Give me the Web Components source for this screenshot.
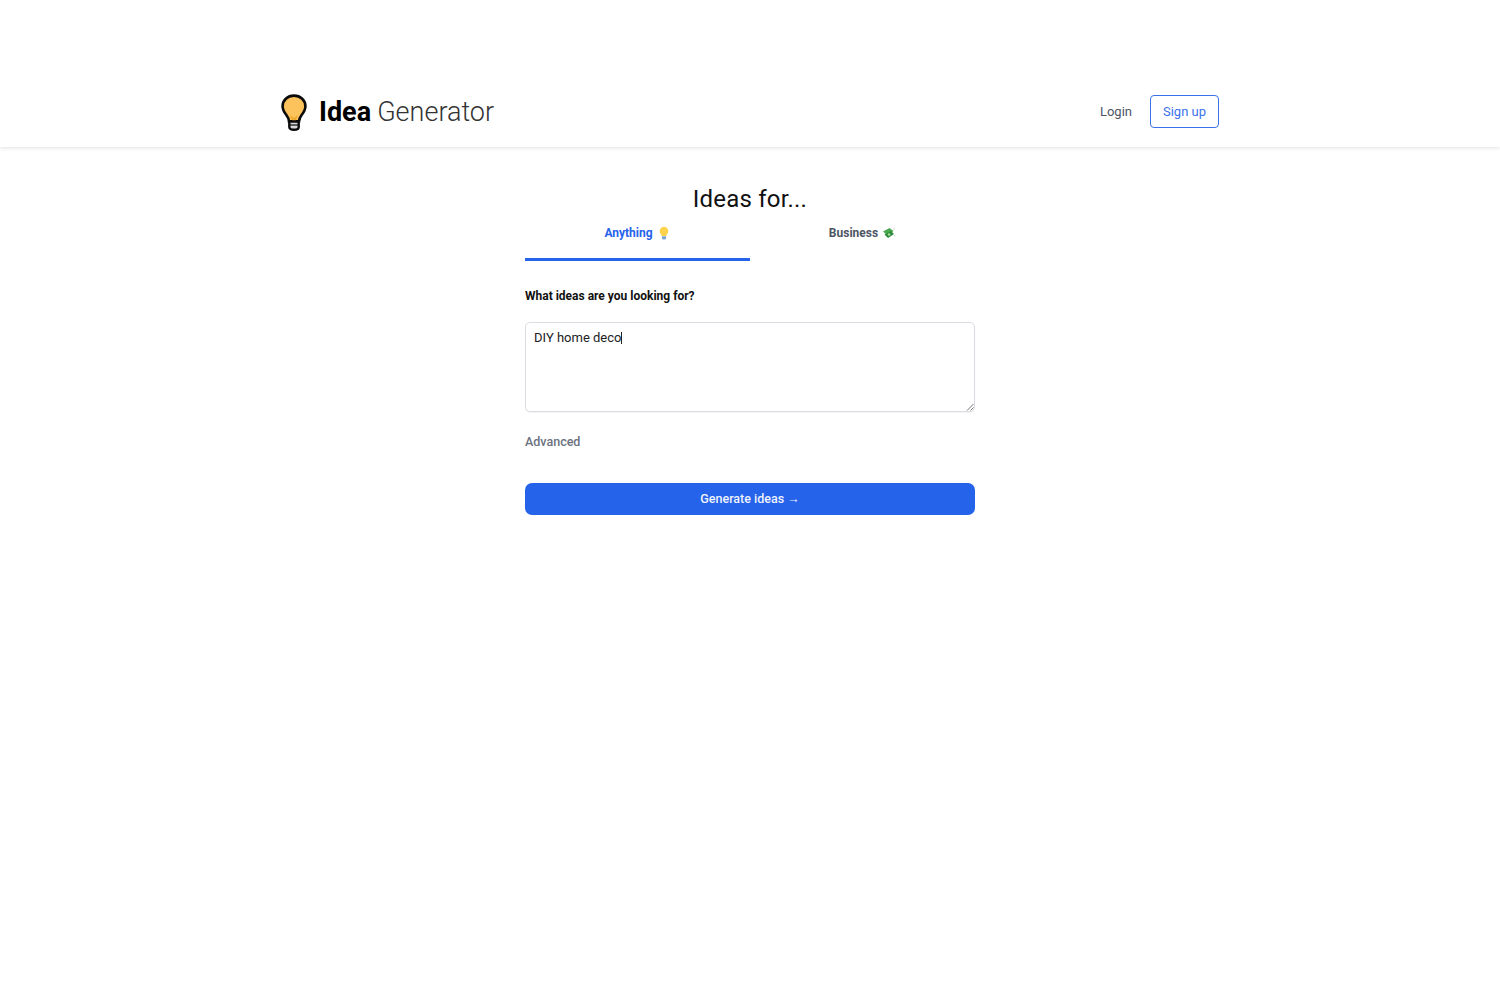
<!DOCTYPE html>
<html><head><meta charset="utf-8">
<style>
html,body{margin:0;padding:0;background:#fff;font-family:Roboto,"Liberation Sans",sans-serif;}
</style></head><body>
<template id="t-header"><style>
:host{display:block;box-sizing:border-box;height:146.5px;padding-top:94px;background:#fff;box-shadow:0 1px 4px rgba(0,0,0,.12);position:relative}
.in{width:938px;margin:0 auto;display:flex;justify-content:space-between;align-items:flex-start}
.logo{display:flex;align-items:center;height:36px;font-size:27px;color:#000;line-height:36px}
svg{display:block;width:26px;height:37px;margin-right:12px;flex:none}
b{font-weight:700}
.light{font-weight:300;color:#333;margin-left:6px}
nav{display:flex;align-items:center;gap:18px;font-size:13px;font-weight:400;padding-top:1px;padding-right:0}
.login{color:#4b5563}
.sign{box-sizing:border-box;height:33px;width:69px;display:flex;align-items:center;justify-content:center;border:1px solid #2563eb;opacity:.9;border-radius:4px;color:#2563eb}
</style><div class="in"><div class="logo">
<svg viewBox="0 0 26 37"><path d="M13 1.6C6.4 1.6 1.6 6.3 1.6 12.2c0 3.6 1.8 6.2 3.6 8.6 1.6 2.1 2.6 4 2.8 6.6h10c.2-2.6 1.2-4.500 2.800-6.600 1.800-2.400 3.600-5 3.600-8.600C24.400 6.300 19.600 1.600 13 1.600z" fill="#fcc35c" stroke="#0b0b0b" stroke-width="2.600"/><path d="M9 21l4 3 4-3-2.500 6.500h-3z" fill="#eda92f"/><path d="M8.300 27.500h9.400v5.600c0 1.600-1.600 2.700-4.700 2.700s-4.700-1.100-4.700-2.700z" fill="#d9d9d9" stroke="#0b0b0b" stroke-width="2.400"/><path d="M9 31h8" stroke="#0b0b0b" stroke-width="1.200"/></svg>
<b>Idea</b><span class="light">Generator</span></div>
<nav><span class="login">Login</span><span class="sign">Sign up</span></nav></div></template>

<template id="t-tabs"><style>
:host{display:flex;height:47px}
</style><slot></slot></template>

<template id="t-tab"><style>
:host{flex:1;box-sizing:border-box;display:flex;align-items:flex-start;justify-content:center;gap:4px;padding-top:11px;font-size:12px;font-weight:700;line-height:16px;color:#4b5563;height:47px;border-bottom:3px solid transparent;white-space:nowrap}
:host([active]){color:#2563eb;border-bottom-color:#2563eb}
::slotted(svg){display:block;width:14px;height:14px;margin-top:1px}
</style><slot name="label"></slot><slot name="icon"></slot></template>

<template id="t-form"><style>
:host{display:block;width:450px;margin:0 auto;padding-top:37px}
h1{margin:0;text-align:center;font-size:24px;font-weight:400;line-height:30px;color:#111;letter-spacing:.2px}
.lab{margin-top:27px;font-size:12px;font-weight:700;line-height:16px;color:#111}
.ta{box-sizing:border-box;position:relative;margin-top:18px;height:90px;border:1px solid #d9dce1;border-radius:5px;padding:7px 8px;font-size:13px;line-height:16px;color:#222;box-shadow:0 1px 1px rgba(0,0,0,.05)}
.caret{display:inline-block;width:1px;height:12px;background:#222;vertical-align:-2px}
.grip{position:absolute;right:0;bottom:0;width:8px;height:8px}
.adv{margin-top:22px;font-size:12.500px;font-weight:500;line-height:16px;color:#6b7280}
.btn{box-sizing:border-box;margin-top:33px;height:32px;background:#2563eb;border-radius:7px;color:#eef2fb;font-size:12.500px;font-weight:500;display:flex;align-items:center;justify-content:center}
</style>
<h1>Ideas for...</h1>
<slot name="tabs"></slot>
<div class="lab">What ideas are you looking for?</div>
<div class="ta">DIY home deco<span class="caret"></span><svg class="grip" viewBox="0 0 8 8"><path d="M1 7.500L7.500 1M4.500 7.500L7.500 4.500" stroke="#777" stroke-width="1" fill="none"/></svg></div>
<div class="adv">Advanced</div>
<div class="btn">Generate ideas →</div>
</template>

<idea-header></idea-header>
<idea-form>
<idea-tabs slot="tabs">
<idea-tab active><span slot="label">Anything</span><svg slot="icon" viewBox="0 0 14 14"><path d="M7 .8a4.300 4.300 0 0 0-4.300 4.300c0 2.200 1.700 3 2 5h4.600c.3-2 2-2.800 2-5A4.300 4.300 0 0 0 7 .8z" fill="#fcd34d"/><path d="M4.900 10.200h4.200v2L8 13.400H6l-1.100-1.200z" fill="#7aa7d8"/></svg></idea-tab>
<idea-tab><span slot="label">Business</span><svg slot="icon" viewBox="0 0 14 14"><path d="M1 5.500L7.500 2l4 3-6 4.500z" fill="#4aa84f"/><path d="M2.500 8.500L9 5l3 3-6 4z" fill="#2e8b3d"/><circle cx="7" cy="8.500" r="1.300" fill="#a7dba0"/><path d="M11 2.500l2 1M12 9.500l1.500.5" stroke="#cfd8cf" stroke-width="1"/></svg></idea-tab>
</idea-tabs>
</idea-form>
<script>
function def(n,id){customElements.define(n,class extends HTMLElement{constructor(){super();this.attachShadow({mode:'open'}).appendChild(document.getElementById(id).content.cloneNode(true));}});}
def('idea-header','t-header');def('idea-tabs','t-tabs');def('idea-tab','t-tab');def('idea-form','t-form');
</script>
</body></html>
